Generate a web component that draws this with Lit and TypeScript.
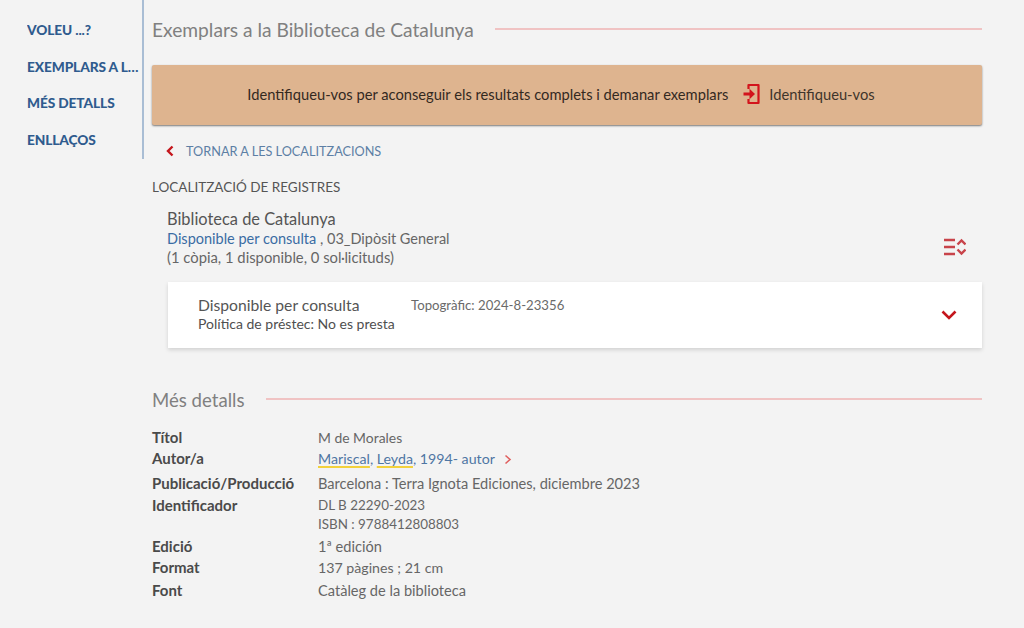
import { LitElement, html, css } from "lit";
import { customElement } from "lit/decorators.js";

@customElement("app-root")
export class AppRoot extends LitElement {
  static styles = css`
    :host { display: block; width: 1024px; height: 628px; overflow: hidden; background: #f3f3f3; font-family: "Lato", "Liberation Sans", sans-serif; color: #4a4a4a; font-size: 14px; }
    .page { display: flex; align-items: flex-start; }
    .nav { width: 144px; height: 159px; box-sizing: border-box; border-right: 2px solid #a9bdd4; padding: 20px 2px 0 27px; display: flex; flex-direction: column; gap: 16.700px; flex: none; }
    .nav a { color: #2f5b8e; font-weight: 900; font-size: 13.700px; line-height: 20px; white-space: nowrap; overflow: hidden; text-overflow: ellipsis; letter-spacing: -0.1px; }
    .main { width: 830px; margin-left: 8px; flex: none; }
    .heading { display: flex; align-items: center; color: #808080; line-height: 26px; white-space: nowrap; }
    .heading::after { content: ""; flex: 1; height: 2px; background: #f0c3c3; margin-bottom: 2px; }
    .h1 { margin-top: 17px; font-size: 19.200px; gap: 21px; }
    .banner { margin-top: 22px; height: 60px; box-sizing: border-box; background: #deb48f; border-radius: 2px; box-shadow: 0 1px 2px rgba(0,0,0,.5); display: flex; align-items: center; justify-content: center; gap: 15px; color: #33291f; padding: 0 12px 2px 0; font-size: 14.700px; }
    .login { display: flex; align-items: center; gap: 8px; color: #3f352b; }
    .back { margin-top: 17px; display: flex; align-items: center; gap: 12px; padding-left: 14px; color: #5d7fa5; font-size: 12.700px; line-height: 18px; }
    .loc { margin-top: 18px; font-size: 13.500px; line-height: 18px; color: #555; }
    .lib { display: flex; justify-content: space-between; margin-top: 12px; padding-left: 15px; }
    .lib .name { font-size: 16.400px; line-height: 21px; color: #555; }
    .lib .l2 { font-size: 14.500px; line-height: 19px; color: #666; }
    .lib .l3 { font-size: 14.800px; line-height: 19px; color: #666; }
    .lib .blue { color: #3a6ca3; }
    .lib svg { margin: 30px 16px 0 0; }
    .card { margin: 15px 0 0 16px; height: 66px; background: #fff; box-shadow: 0 2px 4px rgba(0,0,0,.14); display: flex; padding: 13px 25px 0 30px; box-sizing: border-box; }
    .card .a { width: 213px; flex: none; }
    .card .t1 { font-size: 15.700px; line-height: 20px; color: #555; }
    .card .t2 { font-size: 14px; line-height: 18px; color: #4f4f4f; }
    .card .b { flex: 1; font-size: 13.200px; line-height: 20px; color: #6a6a6a; }
    .card svg { margin-top: 15px; }
    .h2 { margin-top: 39px; font-size: 18.600px; gap: 21px; }
    dl { margin: 15px 0 0; display: grid; grid-template-columns: 166px 1fr; line-height: 19px; }
    dt { font-weight: 700; font-size: 15px; color: #4a4a4a; padding-bottom: 2px; }
    dd { margin: 0; font-size: 14.600px; color: #666; padding-bottom: 2px; }
    .p3 { padding-bottom: 3px; }
    .p4 { padding-bottom: 4px; }
    .p6 { padding-bottom: 6px; }
    .s139 { font-size: 13.900px; }
    .s142 { font-size: 14.200px; }
    .s134 { font-size: 13.400px; }
    .link { color: #4f76a3; }
    .mark { text-decoration: underline; text-decoration-color: #f2d13c; text-decoration-thickness: 2px; text-underline-offset: 2px; }
    .chev { margin-left: 6px; vertical-align: -1px; }
  `;
  render() {
    const items = ["VOLEU ...?", "EXEMPLARS A LA BIBLIOTECA", "MÉS DETALLS", "ENLLAÇOS"];
    return html`<div class="page">
      <nav class="nav">${items.map((t) => html`<a>${t}</a>`)}</nav>
      <main class="main">
        <div class="heading h1">Exemplars a la Biblioteca de Catalunya</div>
        <div class="banner">
          <span>Identifiqueu-vos per aconseguir els resultats complets i demanar exemplars</span>
          <span class="login">
            <svg width="18" height="22" viewBox="0 0 18 22" fill="none"><path d="M5.500 6V2h10v18h-10v-4" stroke="#d3141c" stroke-width="2.200" stroke-linejoin="round"/><path d="M0.500 11h7" stroke="#d3141c" stroke-width="3"/><path d="M6.500 5.800l5.500 5.200-5.500 5.200z" fill="#d3141c"/></svg>
            Identifiqueu-vos
          </span>
        </div>
        <div class="back">
          <svg width="8" height="12" viewBox="0 0 8 12" fill="none"><path d="M6.500 1.500L2 6l4.500 4.500" stroke="#c4161c" stroke-width="2.400"/></svg>
          TORNAR A LES LOCALITZACIONS
        </div>
        <div class="loc">LOCALITZACIÓ DE REGISTRES</div>
        <div class="lib">
          <div>
            <div class="name">Biblioteca de Catalunya</div>
            <div class="l2"><span class="blue">Disponible per consulta</span> , 03_Dipòsit General</div>
            <div class="l3">(1 còpia, 1 disponible, 0 sol·licituds)</div>
          </div>
          <svg width="22" height="18" viewBox="0 0 22 18" fill="none" stroke="#c8434a" stroke-width="2.400"><path d="M0 2h11M0 9h11M0 16h11"/><path d="M13.500 6.500l4-4 4 4M13.500 11.500l4 4 4-4"/></svg>
        </div>
        <div class="card">
          <div class="a"><div class="t1">Disponible per consulta</div><div class="t2">Política de préstec: No es presta</div></div>
          <div class="b">Topogràfic: 2024-8-23356</div>
          <svg width="16" height="10" viewBox="0 0 16 10" fill="none"><path d="M1.500 1.500L8 8l6.500-6.500" stroke="#c4161c" stroke-width="2.600"/></svg>
        </div>
        <div class="heading h2">Més detalls</div>
        <dl>
          <dt>Títol</dt><dd class="s139">M de Morales</dd>
          <dt class="p6">Autor/a</dt><dd class="link p6 s142"><span class="mark">Mariscal</span>, <span class="mark">Leyda</span>, 1994- autor <svg class="chev" width="8" height="11" viewBox="0 0 8 11" fill="none"><path d="M1.500 1.500L6 5.500l-4.500 4" stroke="#e0605f" stroke-width="1.600"/></svg></dd>
          <dt class="p3">Publicació/Producció</dt><dd class="p3">Barcelona : Terra Ignota Ediciones, diciembre 2023</dd>
          <dt class="p3">Identificador</dt><dd class="p3 s134">DL B 22290-2023<br />ISBN : 9788412808803</dd>
          <dt>Edició</dt><dd>1ª edición</dd>
          <dt class="p4">Format</dt><dd class="p4 s142">137 pàgines ; 21 cm</dd>
          <dt>Font</dt><dd>Catàleg de la biblioteca</dd>
        </dl>
      </main>
    </div>`;
  }
}
